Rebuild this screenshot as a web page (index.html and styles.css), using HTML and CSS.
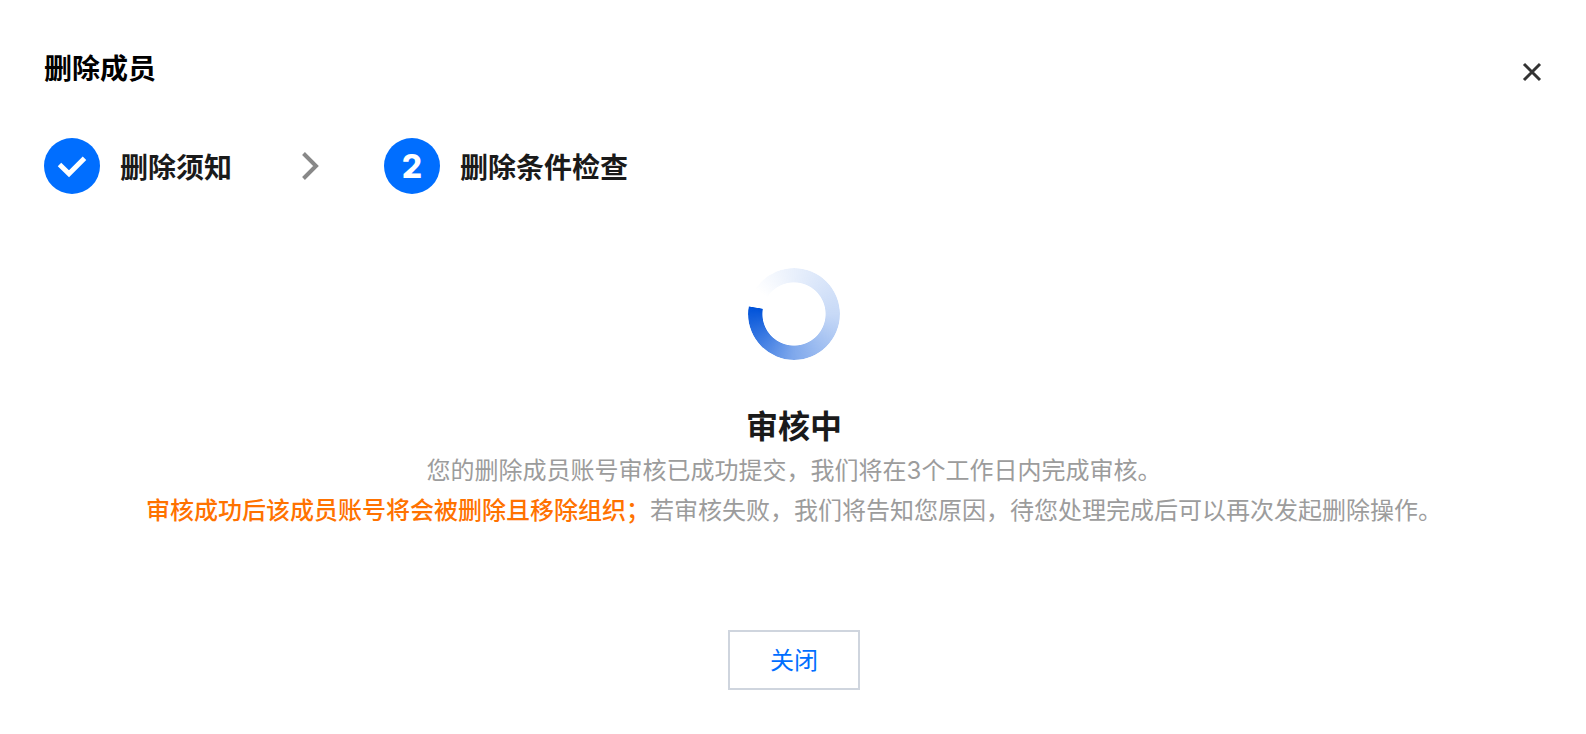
FILE: index.html
```html
<!DOCTYPE html>
<html lang="zh-CN">

<head>
  <meta charset="UTF-8">
  <meta name="viewport" content="width=device-width, initial-scale=1.0">
  <title>删除成员</title>
  <link rel="stylesheet" href="styles.css">
</head>

<body>
  <div class="dialog">
    <div class="dialog-header">
      <h1>删除成员</h1>
      <button class="close-icon" aria-label="关闭">
        <svg width="20" height="20" viewBox="0 0 20 20">
          <path d="M2 2L18 18M18 2L2 18" fill="none" stroke="#333" stroke-width="3" />
        </svg>
      </button>
    </div>

    <div class="steps">
      <div class="step">
        <span class="step-circle">
          <svg width="56" height="56" viewBox="0 0 56 56">
            <path d="M15.5 26.5L25 35.7L40.5 20.3" fill="none" stroke="#fff" stroke-width="5" />
          </svg>
        </span>
        <span class="step-label">删除须知</span>
      </div>
      <svg class="step-arrow" width="18" height="30" viewBox="0 0 18 30">
        <path d="M2.5 2.5L15 15L2.5 27.5" fill="none" stroke="#888" stroke-width="4" />
      </svg>
      <div class="step">
        <span class="step-circle">2</span>
        <span class="step-label">删除条件检查</span>
      </div>
    </div>

    <div class="status">
      <div class="spinner"></div>
      <h2>审核中</h2>
      <p>您的删除成员账号审核已成功提交，我们将在3个工作日内完成审核。</p>
      <p><span class="warning">审核成功后该成员账号将会被删除且移除组织；</span>若审核失败，我们将告知您原因，待您处理完成后可以再次发起删除操作。</p>
    </div>

    <div class="dialog-footer">
      <button class="close-btn">关闭</button>
    </div>
  </div>
</body>

</html>
```

FILE: styles.css
```css
* {
  box-sizing: border-box;
}

body {
  margin: 0;
  background-color: #fff;
  font-family: Inter, "Noto Sans CJK SC", sans-serif;
}

h1,
h2,
p {
  margin: 0;
}

button {
  font-family: inherit;
  background: none;
  cursor: pointer;
}

.dialog {
  height: 734px;
  padding: 48px 44px 0 44px;
}

.dialog-header {
  display: flex;
  justify-content: space-between;
  height: 90px;
}

.dialog-header h1 {
  padding-top: 1px;
  font-size: 28px;
  line-height: 40px;
  color: #000;
}

.close-icon {
  display: flex;
  width: 20px;
  height: 20px;
  margin-top: 14px;
  padding: 0;
  border: none;
}

.steps {
  display: flex;
  align-items: center;
}

.step {
  display: flex;
  align-items: center;
  gap: 20px;
}

.step-circle {
  width: 56px;
  height: 56px;
  border-radius: 50%;
  background-color: #006eff;
  color: #fff;
  font-size: 32px;
  font-weight: 800;
  line-height: 58px;
  text-align: center;
}

.step-circle svg {
  display: block;
}

.step-label {
  padding-top: 3px;
  font-size: 28px;
  font-weight: 700;
  line-height: 40px;
  color: #1a1a1a;
}

.step-arrow {
  margin: 0 65px 0 69px;
}

.status {
  width: 1500px;
  padding-top: 74px;
  text-align: center;
}

.spinner {
  width: 92px;
  height: 92px;
  margin: 0 auto 44px;
  border-radius: 50%;
  background: conic-gradient(from 280deg,
      rgba(0, 82, 217, 0) 22deg,
      rgba(0, 82, 217, 0.09) 81deg,
      rgba(0, 82, 217, 0.22) 171deg,
      rgba(0, 82, 217, 0.5) 261deg,
      #0052d9 359deg,
      rgba(0, 82, 217, 0) 360deg);
  mask: radial-gradient(circle closest-side, transparent 31.2px, #000 32px);
}

.status h2 {
  margin-bottom: 1px;
  font-size: 32px;
  line-height: 46px;
  color: #1a1a1a;
}

.status p {
  font-size: 24px;
  line-height: 40px;
  color: #9c9c9c;
}

.status .warning {
  color: #ff7200;
  font-weight: 500;
}

.dialog-footer {
  width: 1500px;
  padding-top: 99px;
  text-align: center;
}

.close-btn {
  width: 132px;
  height: 60px;
  padding: 0 0 3px;
  border: 2px solid #cfd5de;
  font-size: 24px;
  color: #006eff;
}
```
